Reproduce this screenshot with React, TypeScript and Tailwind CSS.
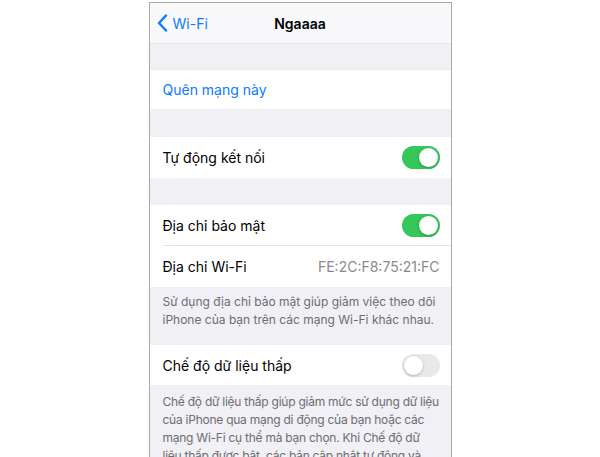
import React from "react";

function Toggle({ on }: { on: boolean }) {
  return (
    <div
      className={
        on
          ? "relative w-[38px] h-[23px] rounded-full bg-[#34c759]"
          : "relative w-[38px] h-[23px] rounded-full bg-[#e9e9eb]"
      }
    >
      <div
        className={
          on
            ? "absolute top-[2px] right-[2px] w-[19px] h-[19px] rounded-full bg-white shadow-[0_1px_3px_rgba(0,0,0,0.25)]"
            : "absolute top-[2px] left-[2px] w-[19px] h-[19px] rounded-full bg-white shadow-[0_1px_3px_rgba(0,0,0,0.25)]"
        }
      />
    </div>
  );
}

function Gap({ h }: { h: string }) {
  return <div className={`${h} bg-[#f0f0f5]`} />;
}

const lowDataLines = [
  "Chế độ dữ liệu thấp giúp giảm mức sử dụng dữ liệu",
  "của iPhone qua mạng di động của bạn hoặc các",
  "mạng Wi-Fi cụ thể mà bạn chọn. Khi Chế độ dữ",
  "liệu thấp được bật, các bản cập nhật tự động và",
];

export default function App() {
  return (
    <div
      className="w-[600px] h-[457px] bg-white overflow-hidden"
      style={{ fontFamily: "Inter, 'Noto Sans', sans-serif" }}
    >
      <div className="mx-auto mt-[2px] w-[303px] h-[455px] border-x border-t border-[#a8a8a8] bg-[#f0f0f5] overflow-hidden">
        {/* nav bar */}
        <div className="relative h-[41px] bg-[#f9f9fb] border-b border-[#e4e4e8] flex items-center">
          <div className="flex items-center pl-[7px] text-[#0a7aff]">
            <svg width="11" height="18" viewBox="0 0 11 18" fill="none">
              <path
                d="M9 1.5 L2 9 L9 16.5"
                stroke="#0a7aff"
                strokeWidth="2.4"
                strokeLinecap="round"
                strokeLinejoin="round"
              />
            </svg>
            <span className="ml-[5px] text-[14px]">Wi-Fi</span>
          </div>
          <div className="absolute inset-0 flex items-center justify-center text-[14px] font-semibold text-black pointer-events-none">
            Ngaaaa
          </div>
        </div>

        <div className="h-[25px]" />

        <div className="h-[41px] bg-white flex items-center pl-[13px] text-[14px] text-[#0a7aff] border-y border-[#ececf0]">
          Quên mạng này
        </div>

        <Gap h="h-[27px]" />

        <div className="h-[41px] bg-white flex items-center justify-between pl-[13px] pr-[11px] text-[14px] text-black">
          <span>Tự động kết nối</span>
          <Toggle on />
        </div>

        <Gap h="h-[27px]" />

        <div className="bg-white">
          <div className="h-[40px] flex items-center justify-between pl-[13px] pr-[11px] text-[14px] text-black">
            <span>Địa chỉ bảo mật</span>
            <Toggle on />
          </div>
          <div className="ml-[13px] h-px bg-[#e4e4e8]" />
          <div className="h-[41px] flex items-center justify-between pl-[13px] pr-[11px] text-[14px]">
            <span className="text-black">Địa chỉ Wi-Fi</span>
            <span className="text-[#8a8a8e]">FE:2C:F8:75:21:FC</span>
          </div>
        </div>

        <div className="h-[58px] pl-[13px] pt-[6px] text-[12px] leading-[18px] text-[#6d6d72] whitespace-nowrap">
          <div>Sử dụng địa chỉ bảo mật giúp giảm việc theo dõi</div>
          <div>iPhone của bạn trên các mạng Wi-Fi khác nhau.</div>
        </div>

        <div className="h-[40px] bg-white flex items-center justify-between pl-[13px] pr-[11px] text-[14px] text-black">
          <span>Chế độ dữ liệu thấp</span>
          <Toggle on={false} />
        </div>

        <div className="pl-[13px] pt-[8px] text-[12px] leading-[18px] tracking-[-0.25px] text-[#6d6d72] whitespace-nowrap">
          {lowDataLines.map((line) => (
            <div key={line}>{line}</div>
          ))}
        </div>
      </div>
    </div>
  );
}
